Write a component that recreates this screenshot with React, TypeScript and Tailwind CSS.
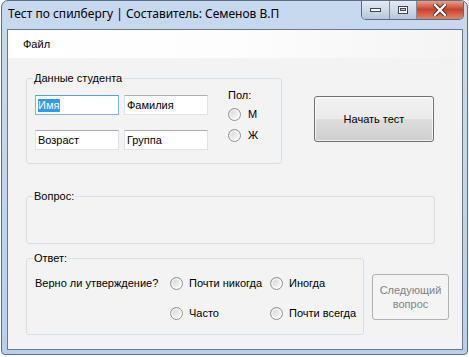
import React from "react";

/* ── Small Win7-style widgets ─────────────────────────────── */
function Radio({ label, gap = "ml-[6px]" }: { label: string; gap?: string }) {
  return (
    <label className="flex items-center h-[20px]">
      <span className="w-[13px] h-[13px] rounded-full border border-[#8f9294] bg-gradient-to-br from-[#c9cbcd] via-[#e6e8e9] to-[#ffffff] shadow-[inset_0_0_0_2px_rgba(255,255,255,0.5)] shrink-0" />
      <span className={`${gap} leading-[13px]`}>{label}</span>
    </label>
  );
}

function TextBox({ children, focused = false }: { children: React.ReactNode; focused?: boolean }) {
  return (
    <div
      className={`h-[20px] w-[84px] bg-white border flex items-center pl-[2px] ${
        focused
          ? "border-[#7eb4ea] border-t-[#569de5]"
          : "border-[#dde3ea] border-t-[#abadb3]"
      }`}
    >
      {children}
    </div>
  );
}

function Group({
  title,
  className,
  legendClass = "ml-[6px]",
  children,
}: {
  title: string;
  className: string;
  legendClass?: string;
  children?: React.ReactNode;
}) {
  return (
    <fieldset className={`border border-[#d5dfe5] rounded-[3px] ${className}`}>
      <legend className={`${legendClass} px-[1px] leading-[13px]`}>{title}</legend>
      {children}
    </fieldset>
  );
}

/* ── Main component ──────────────────────────────────────── */
export default function App() {
  return (
    <div
      className="w-[469px] h-[357px] bg-white text-black"
      style={{ fontFamily: '"Liberation Sans", Arial, sans-serif' }}
    >
      {/* ── Window frame ── */}
      <div className="ml-[1px] w-[467px] h-[355px] border border-[#5f6f82] rounded-t-[7px] rounded-b-[4px] bg-gradient-to-b from-[#c6d9ef] via-[#c0d5ed] to-[#b7cfea] flex flex-col overflow-hidden">
        {/* ── Title bar ── */}
        <div className="h-[28px] flex justify-between items-start shrink-0">
          <span
            className="pl-[6px] pt-[5px] text-[12px] leading-[16px]"
            style={{ fontFamily: '"Noto Sans", "Open Sans", sans-serif' }}
          >
            Тест по спилбергу | Составитель: Семенов В.П
          </span>
          <div className="mr-[3px] -mt-[1px] h-[20px] flex border border-t-0 border-[#5c6b7d] rounded-b-[5px] overflow-hidden">
            <div className="w-[28px] bg-gradient-to-b from-[#e6edf5] via-[#cfdbe8] to-[#b6c6d8] flex items-center justify-center border-r border-[#7d8b9b]">
              <span className="w-[11px] h-[4px] bg-white border border-[#3c4858]" />
            </div>
            <div className="w-[27px] bg-gradient-to-b from-[#e6edf5] via-[#cfdbe8] to-[#b6c6d8] flex items-center justify-center border-r border-[#7d8b9b]">
              <span className="w-[10px] h-[8px] border border-[#3c4858] flex items-center justify-center bg-white">
                <span className="w-[6px] h-[3px] border border-[#3c4858] bg-[#c8d3df]" />
              </span>
            </div>
            <div className="w-[46px] bg-gradient-to-b from-[#e9a897] via-[#c8412a] to-[#d98667] flex items-center justify-center">
              <svg width="14" height="12" viewBox="0 0 14 12">
                <path
                  d="M2 1 L12 11 M12 1 L2 11"
                  stroke="#3a2a28"
                  strokeWidth="4.2"
                  strokeLinecap="square"
                />
                <path
                  d="M2 1 L12 11 M12 1 L2 11"
                  stroke="#ffffff"
                  strokeWidth="2.4"
                  strokeLinecap="square"
                />
              </svg>
            </div>
          </div>
        </div>

        {/* ── Client area ── */}
        <div className="ml-[5px] w-[456px] h-[321px] border border-[#6a7a8e] bg-[#f3f3f3] text-[11px] flex flex-col shrink-0">
          {/* ── Menu strip ── */}
          <div className="h-[28px] bg-gradient-to-r from-white via-[#fdfdfd] to-[#f4f4f4] flex items-center pl-[15px] shrink-0">
            <span className="leading-[13px]">Файл</span>
          </div>

          {/* ── Form body ── */}
          <div className="flex flex-col pl-[18px] pt-[14px]">
            {/* Row 1: student data + start button */}
            <div className="flex items-start">
              <Group
                title="Данные студента"
                legendClass="-ml-[2px]"
                className="w-[256px] pl-[8px] pb-[13px] pt-[4px]"
              >
                <div className="flex items-start">
                  <div className="grid grid-cols-[84px_84px] gap-x-[5px] gap-y-[15px] mt-[6px]">
                    <TextBox focused>
                      <span className="bg-[#3399ff] text-white leading-[13px] border-r border-[#ff7a00]">
                        Имя
                      </span>
                    </TextBox>
                    <TextBox>Фамилия</TextBox>
                    <TextBox>Возраст</TextBox>
                    <TextBox>Группа</TextBox>
                  </div>
                  <div className="ml-[20px] flex flex-col">
                    <span className="leading-[13px]">Пол:</span>
                    <div className="mt-[2px] flex flex-col gap-[1px]">
                      <Radio label="М" gap="ml-[7px]" />
                      <Radio label="Ж" gap="ml-[7px]" />
                    </div>
                  </div>
                </div>
              </Group>
              <button className="ml-[32px] mt-[24px] w-[120px] h-[46px] rounded-[3px] border border-[#707070] bg-[linear-gradient(#f2f2f2_0%,#ebebeb_50%,#dddddd_50%,#cfcfcf_100%)] shadow-[inset_0_0_0_1px_rgba(255,255,255,0.7)] text-[11px]">
                Начать тест
              </button>
            </div>

            {/* Row 2: question */}
            <Group title="Вопрос:" className="mt-[26px] w-[409px]">
              <div className="h-[40px]" />
            </Group>

            {/* Row 3: answer + next button */}
            <div className="mt-[8px] flex items-start">
              <Group
                title="Ответ:"
                legendClass="-ml-[2px]"
                className="w-[338px] pl-[8px] pt-[8px] pb-[11px]"
              >
                <div className="grid grid-cols-[135px_100px_1fr] gap-y-[10px] items-center">
                  <span className="leading-[13px]">Верно ли утверждение?</span>
                  <Radio label="Почти никогда" />
                  <Radio label="Иногда" />
                  <span />
                  <Radio label="Часто" />
                  <Radio label="Почти всегда" />
                </div>
              </Group>
              <button
                disabled
                className="ml-[8px] mt-[22px] w-[77px] h-[46px] rounded-[3px] border border-[#adb2b5] bg-[#f4f4f4] text-[#838383] text-[11px] leading-[14px]"
              >
                Следующий
                <br />
                вопрос
              </button>
            </div>
          </div>
        </div>
      </div>
    </div>
  );
}
